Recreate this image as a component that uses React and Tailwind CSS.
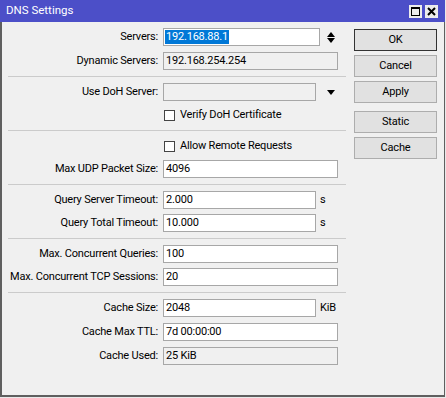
import React from 'react';

const FONT = "font-['Roboto','Liberation_Sans',sans-serif]";

function Field({ value = '', w = 'w-[175px]', grey = false, selected = false }) {
  return (
    <div
      className={`h-[18px] ${w} shrink-0 border border-[#a7a7a7] flex items-center pl-[2px] overflow-hidden whitespace-nowrap ${
        grey ? 'bg-[#f0f0f0]' : 'bg-white'
      }`}
    >
      {selected ? (
        <span className="bg-[#0078d7] text-white h-[14px] leading-[14px] pl-[1px] pr-[1px] -ml-[1px]">{value}</span>
      ) : (
        <span>{value}</span>
      )}
    </div>
  );
}

function Row({ label, children }) {
  return (
    <div className="flex items-center h-[18px]">
      <span className="w-[155px] shrink-0 text-right pr-[5px] whitespace-nowrap">{label}</span>
      {children}
    </div>
  );
}

function Check({ label }) {
  return (
    <div className="flex items-center h-[18px] pl-[156px]">
      <div className="w-[11px] h-[11px] border border-[#444] bg-white" />
      <span className="ml-[5px]">{label}</span>
    </div>
  );
}

function Sep() {
  return <div className="h-px bg-[#cbcbcb] my-[6px]" />;
}

function Btn({ children, main = false }) {
  return (
    <div
      className={`h-[22px] w-[83px] flex items-center justify-center bg-[#e1e1e1] border ${
        main ? 'border-[#333]' : 'border-[#adadad]'
      }`}
    >
      {children}
    </div>
  );
}

function Up() {
  return (
    <svg width="8" height="5" viewBox="0 0 8 5">
      <polygon points="4,0 8,5 0,5" fill="#000" />
    </svg>
  );
}

function Down() {
  return (
    <svg width="8" height="5" viewBox="0 0 8 5">
      <polygon points="0,0 8,0 4,5" fill="#000" />
    </svg>
  );
}

export default function App() {
  return (
    <div className={`w-[446px] h-[398px] bg-[#e9e9e9] text-[11px] tracking-[-0.2px] text-black ${FONT}`}>
      <div className="w-[445px]">
        {/* title bar */}
        <div className="h-[22px] bg-[#4c4fc8] flex items-center pl-[6px] text-white text-[11.5px] tracking-normal">
          <span>DNS Settings</span>
          <div className="ml-auto mr-[7px] flex gap-[3px]">
            <div className="w-[13px] h-[13px] bg-[#ececec] flex items-center justify-center">
              <div className="w-[9px] h-[9px] border border-black border-t-2" />
            </div>
            <div className="w-[13px] h-[13px] bg-[#ececec] flex items-center justify-center">
              <svg width="9" height="9" viewBox="0 0 9 9">
                <path d="M1 1 L8 8 M8 1 L1 8" stroke="#000" strokeWidth="2" />
              </svg>
            </div>
          </div>
        </div>

        {/* body */}
        <div className="h-[375px] bg-[#f0f0f0] border-l-2 border-b-2 border-r border-[#5f5f5f] flex pl-[6px]">
          <div className="w-[338px] pt-[6px]">
            <div className="flex flex-col gap-[6px]">
              <Row label="Servers:">
                <Field value="192.168.88.1" w="w-[157px]" selected />
                <div className="ml-[7px] flex flex-col gap-[1px]">
                  <Up />
                  <Down />
                </div>
              </Row>
              <Row label="Dynamic Servers:">
                <Field value="192.168.254.254" grey />
              </Row>
            </div>
            <Sep />
            <div className="flex flex-col gap-[5px]">
              <Row label="Use DoH Server:">
                <Field w="w-[153px]" grey />
                <div className="ml-[11px] flex">
                  <Down />
                </div>
              </Row>
              <Check label="Verify DoH Certificate" />
            </div>
            <Sep />
            <div className="flex flex-col gap-[5px]">
              <Check label="Allow Remote Requests" />
              <Row label="Max UDP Packet Size:">
                <Field value="4096" />
              </Row>
            </div>
            <Sep />
            <div className="flex flex-col gap-[5px]">
              <Row label="Query Server Timeout:">
                <Field value="2.000" w="w-[153px]" />
                <span className="ml-[4px]">s</span>
              </Row>
              <Row label="Query Total Timeout:">
                <Field value="10.000" w="w-[153px]" />
                <span className="ml-[4px]">s</span>
              </Row>
            </div>
            <Sep />
            <div className="flex flex-col gap-[5px]">
              <Row label="Max. Concurrent Queries:">
                <Field value="100" />
              </Row>
              <Row label="Max. Concurrent TCP Sessions:">
                <Field value="20" />
              </Row>
            </div>
            <Sep />
            <div className="flex flex-col gap-[6px]">
              <Row label="Cache Size:">
                <Field value="2048" w="w-[153px]" />
                <span className="ml-[4px]">KiB</span>
              </Row>
              <Row label="Cache Max TTL:">
                <Field value="7d 00:00:00" />
              </Row>
              <Row label="Cache Used:">
                <Field value="25 KiB" grey />
              </Row>
            </div>
          </div>

          <div className="ml-[8px] pt-[7px] flex flex-col">
            <div className="flex flex-col gap-[4px]">
              <Btn main>OK</Btn>
              <Btn>Cancel</Btn>
              <Btn>Apply</Btn>
            </div>
            <div className="flex flex-col gap-[4px] mt-[8px]">
              <Btn>Static</Btn>
              <Btn>Cache</Btn>
            </div>
          </div>
        </div>
      </div>
    </div>
  );
}
